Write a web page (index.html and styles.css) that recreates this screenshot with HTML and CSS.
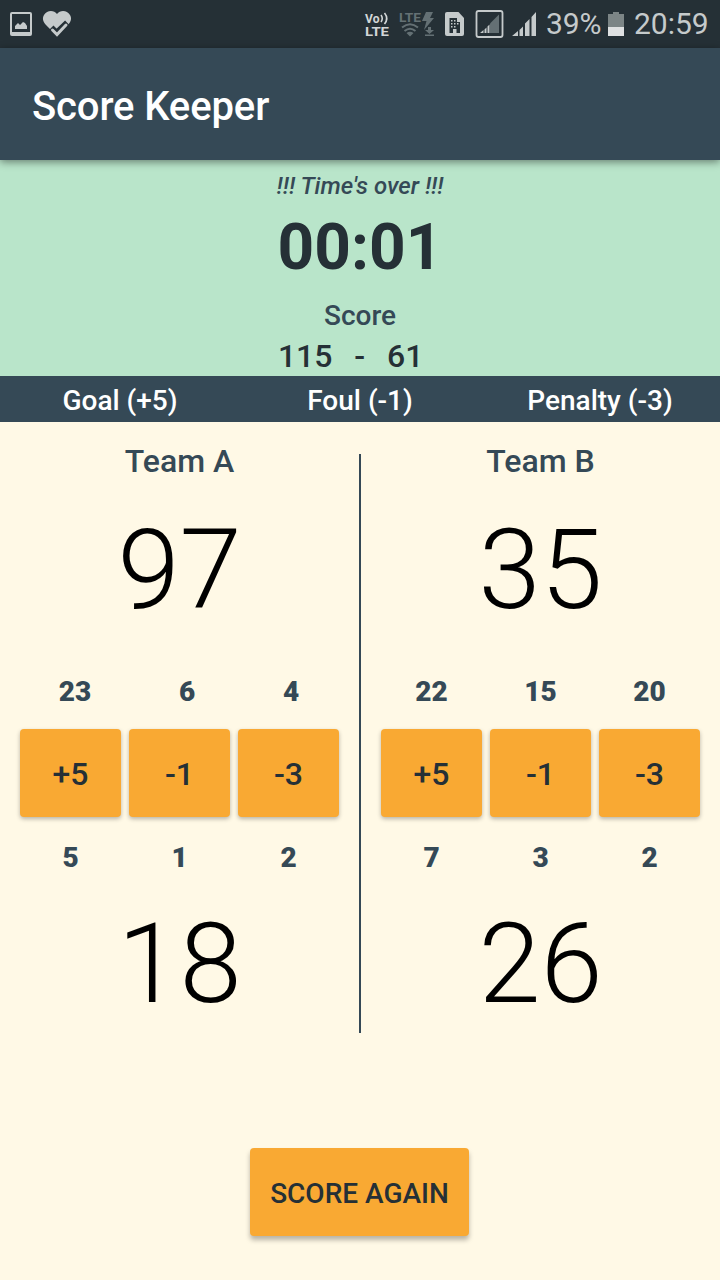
FILE: index.html
```html
<!DOCTYPE html>
<html lang="en">
<head>
<meta charset="utf-8">
<title>Score Keeper</title>
<link rel="stylesheet" href="styles.css">
</head>
<body>
<div class="screen">
  <div class="status">
    <svg class="status-icons-left" width="80" height="48" viewBox="0 0 80 48">
      <path fill="#c5cacb" fill-rule="evenodd" d="M12 12h18a2 2 0 0 1 2 2v20a2 2 0 0 1-2 2H12a2 2 0 0 1-2-2V14a2 2 0 0 1 2-2zM12 14v18h18V14z"/>
      <path fill="#c5cacb" d="M15 29v-3l3-3 2 2 3-3 2 1 2 3v3z"/>
      <path fill="#c5cacb" d="M57 36L46 25c-3-3-4-7-2-10 3-5 10-5 13-1 3-4 10-4 13 1 2 3 1 7-2 10z"/>
      <path fill="none" stroke="#253036" stroke-width="7" d="M51 28l5.500 5.500L67.500 23"/>
      <path fill="none" stroke="#c5cacb" stroke-width="3" stroke-linecap="round" d="M52.500 30l4.500 4.500L66 25"/>
    </svg>
    <svg class="status-icons-right" width="182" height="48" viewBox="360 0 182 48">
      <g font-family="Roboto, sans-serif" font-weight="700">
        <text x="365" y="22.500" font-size="13" textLength="14.500" lengthAdjust="spacingAndGlyphs" fill="#d2d6d7">Vo</text>
        <text x="365" y="36" font-size="13.500" textLength="24" lengthAdjust="spacingAndGlyphs" fill="#d2d6d7">LTE</text>
        <text x="399" y="22" font-size="12.500" textLength="22" lengthAdjust="spacingAndGlyphs" fill="#647074">LTE</text>
      </g>
      <g fill="none" stroke="#d2d6d7" stroke-width="1.600">
        <path d="M381 15q2.500 3.500 0 7"/><path d="M384.500 13q4.500 5.500 0 11"/>
      </g>
      <g fill="none" stroke="#647074" stroke-width="2">
        <path d="M402 27.500q8-6.500 16 0"/><path d="M404.500 31q5.500-4.500 11 0"/>
      </g>
      <path fill="#647074" d="M406.500 33q3.500-2.500 7 0l-3.500 3.500zM426 12h7l-3 6h4l-10 12 2.500-9H422zM428 27h3v3h3l-4.500 4-4.500-4h3zM425 34.500h9V36h-9z"/>
      <path fill="#c5cacb" d="M447 12h11.500l5.500 6v16a2 2 0 0 1-2 2h-15a2 2 0 0 1-2-2V14a2 2 0 0 1 2-2z"/>
      <path fill="#253036" d="M449.500 18h7.500v4h3v11h-3.500v-4H453v4h-3.500z"/>
      <g fill="#c5cacb"><path d="M451 20h1.500v1.500H451zM454 20h1.500v1.500H454zM451 23h1.500v1.500H451zM454 23h1.500v1.500H454zM457 23h1.500v1.500H457zM451 26h1.500v1.500H451zM454 26h1.500v1.500H454z"/></g>
      <rect x="476.500" y="11" width="26" height="26" rx="2" fill="none" stroke="#c5cacb" stroke-width="1.800"/>
      <path fill="#647074" d="M490 23.500l9-9V33h-9z"/>
      <path fill="#c5cacb" d="M480 33l3.500-3v3zM484.500 29.500l2-2V33h-2zM487.500 26.500l2-2V33h-2z"/>
      <path fill="#c5cacb" d="M512 36l6-5v5zM519.500 30l3.500-3.500V36h-3.500zM525 23.500l4.500-4.500v17H525zM531.500 17l4.500-5v24h-4.500z"/>
    </svg>
    <span class="battery-text">39%</span>
    <svg class="battery" width="16" height="24" viewBox="0 0 16 24">
      <path fill="#7c8586" d="M0 2h5V0h6v2h5v13H0z"/><path fill="#dfe1e2" d="M0 15h16v9H0z"/>
    </svg>
    <span class="clock">20:59</span>
  </div>

  <header class="toolbar">Score Keeper</header>

  <section class="summary">
    <div class="notice">!!! Time's over !!!</div>
    <div class="timer">00:01</div>
    <div class="label">Score</div>
    <div class="total"><span>115</span><span>-</span><span>61</span></div>
  </section>

  <div class="legend"><span>Goal (+5)</span><span>Foul (-1)</span><span>Penalty (-3)</span></div>

  <main class="teams">
    <section class="team">
      <h2 class="team-name">Team A</h2>
      <div class="points">97</div>
      <div class="counts counts-uneven"><span>23</span><span>6</span><span>4</span></div>
      <div class="buttons"><button class="btn">+5</button><button class="btn">-1</button><button class="btn">-3</button></div>
      <div class="counts counts-low"><span>5</span><span>1</span><span>2</span></div>
      <div class="points points-low">18</div>
    </section>
    <div class="divider"></div>
    <section class="team">
      <h2 class="team-name">Team B</h2>
      <div class="points">35</div>
      <div class="counts"><span>22</span><span>15</span><span>20</span></div>
      <div class="buttons"><button class="btn">+5</button><button class="btn">-1</button><button class="btn">-3</button></div>
      <div class="counts counts-low"><span>7</span><span>3</span><span>2</span></div>
      <div class="points points-low">26</div>
    </section>
  </main>

  <footer class="actions"><button class="btn btn-again">SCORE AGAIN</button></footer>
</div>
</body>
</html>
```
FILE: styles.css
```css
* { box-sizing: border-box; }

body {
  margin: 0;
  font-family: Roboto, sans-serif;
  font-weight: 500;
  color: #354956;
}

.screen {
  display: flex;
  flex-direction: column;
  width: 720px;
  height: 1280px;
  overflow: hidden;
  background: #fff9e6;
}

.status {
  display: flex;
  align-items: center;
  height: 48px;
  background: #253036;
  color: #c5cacb;
  font-size: 30px;
  font-weight: 400;
  line-height: 50px;
}

.status-icons-right { margin-left: 280px; }
.battery-text { width: 62px; padding-left: 4px; letter-spacing: -0.1px; }
.battery { margin-left: 4px; }
.clock { margin-left: 10px; }

.toolbar {
  position: relative;
  height: 112px;
  padding: 3px 32px 0;
  background: #354956;
  box-shadow: 0 2px 8px rgba(0, 0, 0, 0.45);
  color: #fff;
  font-size: 40px;
  letter-spacing: -0.12px;
  line-height: 112px;
}

.summary {
  height: 216px;
  padding-top: 10px;
  background: #b9e5ca;
  text-align: center;
}

.notice { font-size: 24px; font-style: italic; line-height: 32px; }
.timer { color: #253036; font-size: 64px; font-weight: 700; line-height: 92px; }
.label { font-size: 28px; line-height: 44px; }

.total {
  display: flex;
  gap: 22px;
  padding-left: 278px;
  color: #253036;
  font-size: 32px;
  letter-spacing: -0.1px;
  line-height: 36px;
}

.legend {
  display: grid;
  grid-template-columns: repeat(3, 1fr);
  height: 46px;
  background: #354956;
  color: #fff;
  font-size: 28px;
  line-height: 50px;
  text-align: center;
}

.teams {
  display: flex;
  height: 643px;
  padding: 0 20px;
}

.divider {
  flex: none;
  width: 2px;
  height: 579px;
  margin: 32px 20px 0;
  background: #354956;
}

.team { flex: 0 0 319px; padding-top: 18px; text-align: center; }
.team-name { margin: 0; font-size: 32px; font-weight: 500; line-height: 42px; }

.points {
  height: 132px;
  margin-top: 22px;
  color: #000;
  font-size: 112px;
  font-weight: 300;
  line-height: 132px;
}

.counts {
  display: grid;
  grid-template-columns: repeat(3, 101px);
  gap: 8px;
  margin-top: 37px;
  font-size: 28px;
  font-weight: 900;
  line-height: 38px;
}

.counts-uneven { grid-template-columns: 110px 114px 94px; gap: 0; }

.buttons {
  display: grid;
  grid-template-columns: repeat(3, 101px);
  gap: 8px;
  margin-top: 18px;
}

.btn {
  height: 88px;
  padding: 2px 0 0;
  border: 0;
  border-radius: 4px;
  background: #f9a933;
  box-shadow: 0 2px 4px rgba(0, 0, 0, 0.28);
  color: #253036;
  font: 500 32px Roboto, sans-serif;
}

.counts-low { margin-top: 22px; }
.points-low { margin-top: 21px; }

.actions { display: flex; justify-content: center; padding: 83px 1px 0 0; }

.btn-again {
  width: 219px;
  font-size: 28px;
  box-shadow: 0 4px 5px rgba(0, 0, 0, 0.28);
}
```
